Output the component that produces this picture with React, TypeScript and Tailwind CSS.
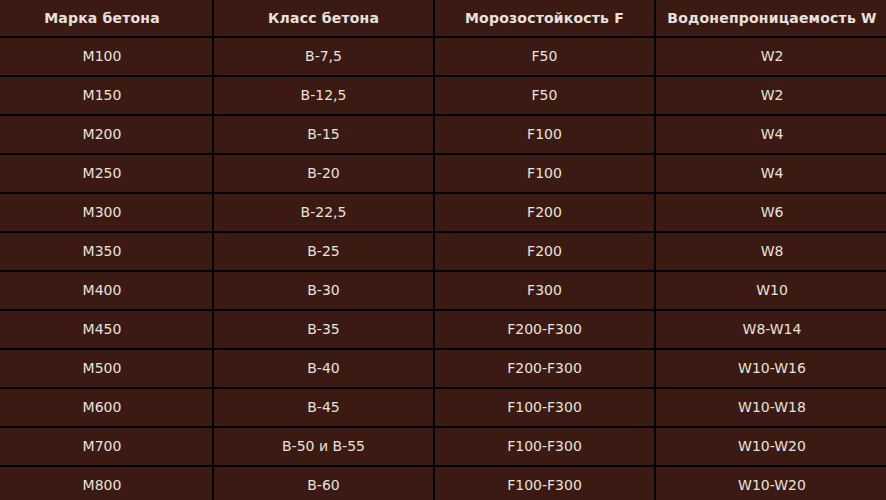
const rows = [
  ['М100', 'В-7,5', 'F50', 'W2'],
  ['М150', 'В-12,5', 'F50', 'W2'],
  ['М200', 'В-15', 'F100', 'W4'],
  ['М250', 'В-20', 'F100', 'W4'],
  ['М300', 'В-22,5', 'F200', 'W6'],
  ['М350', 'В-25', 'F200', 'W8'],
  ['М400', 'В-30', 'F300', 'W10'],
  ['М450', 'В-35', 'F200-F300', 'W8-W14'],
  ['М500', 'В-40', 'F200-F300', 'W10-W16'],
  ['М600', 'В-45', 'F100-F300', 'W10-W18'],
  ['М700', 'В-50 и В-55', 'F100-F300', 'W10-W20'],
  ['М800', 'В-60', 'F100-F300', 'W10-W20'],
];

const headers = ['Марка бетона', 'Класс бетона', 'Морозостойкость F', 'Водонепроницаемость W'];

export default function App() {
  return (
    <div className="w-[886px] h-[500px] overflow-hidden bg-[#3b1a13] font-['DejaVu_Sans',Verdana,sans-serif] text-[#e8e2dc]">
      <div className="ml-[-8px] w-[900px] bg-black">
        {/* Header */}
        <div className="grid grid-cols-[220px_219px_219px_232px] gap-x-[2px] pb-[2px] h-[38px]">
          {headers.map((h) => (
            <div key={h} className="bg-[#3b1a13] flex items-center justify-center text-[14px] font-bold tracking-[0.2px]">
              {h}
            </div>
          ))}
        </div>
        {/* Body */}
        {rows.map((r, i) => (
          <div key={i} className="grid grid-cols-[220px_219px_219px_232px] gap-x-[2px] pb-[2px] h-[39px]">
            {r.map((c, j) => (
              <div key={j} className="bg-[#3b1a13] flex items-center justify-center text-[14px]">
                {c}
              </div>
            ))}
          </div>
        ))}
      </div>
    </div>
  );
}
